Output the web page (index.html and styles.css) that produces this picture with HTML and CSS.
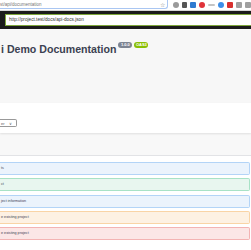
FILE: index.html
```html
<!DOCTYPE html>
<html lang="en">
<head>
    <meta charset="UTF-8">
    <meta name="viewport" content="width=device-width, initial-scale=1.0">
    <title>Api Demo Documentation</title>
    <link rel="stylesheet" href="styles.css">
</head>
<body>

    <!-- Browser chrome -->
    <div class="browser-bar">
        <div class="url-field">
            <span class="url-text">st/api/documentation</span>
            <span class="star">&#9734;</span>
        </div>
        <div class="ext-icons">
            <span class="ext ext-shield"></span>
            <span class="ext ext-bin"></span>
            <span class="ext ext-trello"></span>
            <span class="ext ext-stop"></span>
            <span class="ext ext-dash"></span>
            <span class="ext ext-blue"></span>
            <span class="ext ext-red"></span>
            <span class="ext ext-gray"></span>
            <span class="ext ext-gray"></span>
        </div>
    </div>

    <!-- Swagger top bar -->
    <div class="topbar">
        <div class="topbar-input">http://project.test/docs/api-docs.json</div>
    </div>

    <!-- Info header -->
    <div class="info">
        <h2 class="title">i Demo Documentation</h2>
        <div class="badges">
            <span class="badge badge-version">1.0.0</span>
            <span class="badge badge-oas">OAS3</span>
        </div>
    </div>

    <!-- Servers -->
    <div class="scheme-container">
        <div class="server-select">
            <span>er</span>
            <span class="chevron">&#8744;</span>
        </div>
    </div>

    <div class="tag-header"></div>

    <!-- Operations -->
    <div class="opblocks">
        <div class="opblock get">ts</div>
        <div class="opblock post">ct</div>
        <div class="opblock get">ject information</div>
        <div class="opblock put">e existing project</div>
        <div class="opblock delete">e existing project</div>
    </div>

</body>
</html>
```

FILE: styles.css
```css
* {
    margin: 0;
    padding: 0;
    box-sizing: border-box;
    font-family: "Liberation Sans", Arial, sans-serif;
}

body {
    width: 251px;
    overflow: hidden;
    background: #fff;
    color: #3b4151;
}

/* Browser bar */
.browser-bar {
    display: flex;
    align-items: flex-start;
    height: 11px;
    background: #fff;
    border-bottom: 1px solid #d6d6d6;
}

.url-field {
    display: flex;
    align-items: center;
    justify-content: space-between;
    width: 168px;
    height: 9px;
    border: 1px solid #a9c6f2;
    border-top: none;
    border-left: none;
    border-radius: 0 0 3px 0;
    padding-right: 2px;
}

.url-text {
    font-size: 4.5px;
    color: #777;
}

.star {
    font-size: 6px;
    color: #888;
}

.ext-icons {
    display: flex;
    align-items: center;
    gap: 3px;
    height: 9px;
    padding-left: 5px;
}

.ext {
    display: block;
    width: 6px;
    height: 6px;
}

.ext-shield {
    border-radius: 50%;
    background: #9a9a9a;
}

.ext-bin {
    border-radius: 1px;
    background: #555;
    width: 5px;
}

.ext-trello {
    background: #2f7bd0;
    border-radius: 1px;
}

.ext-stop {
    border-radius: 50%;
    background: #e0333a;
}

.ext-dash {
    height: 2px;
    width: 7px;
    background: #c4c4c4;
    border-radius: 1px;
}

.ext-blue {
    border-radius: 50%;
    background: #3c8ee8;
}

.ext-red {
    background: #d8302f;
    border-radius: 1px;
}

.ext-gray {
    background: #a0a0a0;
    border-radius: 1px;
}

/* Top bar */
.topbar {
    height: 18px;
    background: #1b1b1b;
    padding: 3px 0 3px 5px;
}

.topbar-input {
    width: 100%;
    height: 12px;
    background: #fff;
    border: 1px solid #7ea73a;
    border-right: none;
    font-size: 4.7px;
    line-height: 10px;
    padding-left: 3px;
    color: #333;
}

/* Info */
.info {
    display: flex;
    align-items: flex-start;
    height: 74px;
    background: #f7f7f7;
    padding-top: 15px;
    padding-left: 1px;
}

.title {
    font-size: 10.6px;
    line-height: 11px;
    font-weight: bold;
    color: #3b4151;
}

.badges {
    display: flex;
    gap: 2px;
    margin-left: 2px;
    margin-top: -2px;
}

.badge {
    font-size: 4px;
    line-height: 6px;
    height: 6px;
    width: 14px;
    text-align: center;
    border-radius: 3px;
    color: #fff;
    font-weight: bold;
}

.badge-version {
    background: #7d8492;
}

.badge-oas {
    background: #89bf04;
}

/* Servers */
.scheme-container {
    height: 30px;
    background: #fff;
    padding-top: 16px;
    box-shadow: 0 1px 2px rgba(0, 0, 0, 0.1);
    position: relative;
}

.server-select {
    display: flex;
    align-items: center;
    gap: 4px;
    width: 17px;
    height: 8px;
    border: 1px solid #999;
    border-left: none;
    border-radius: 0 2px 2px 0;
    font-size: 4px;
    padding-left: 1px;
    color: #555;
}

.chevron {
    font-size: 4px;
}

.tag-header {
    height: 23px;
    background: #f8f8f8;
    border-bottom: 1px solid #e2e3e6;
}

/* Operation blocks */
.opblocks {
    display: flex;
    flex-direction: column;
    gap: 3.25px;
    padding-top: 6px;
    padding-right: 1px;
}

.opblock {
    height: 13px;
    border: 1px solid;
    border-left: none;
    border-radius: 0 2px 2px 0;
    font-size: 3.7px;
    line-height: 11px;
    padding-left: 1px;
    color: #3b4151;
}

.get {
    background: #ebf3fc;
    border-color: #b3d4f7;
}

.post {
    background: #e8f6ef;
    border-color: #a8e2c6;
}

.put {
    background: #fdf1e3;
    border-color: #f9d4a6;
}

.delete {
    background: #fbe6e6;
    border-color: #f3b3b3;
}
```
